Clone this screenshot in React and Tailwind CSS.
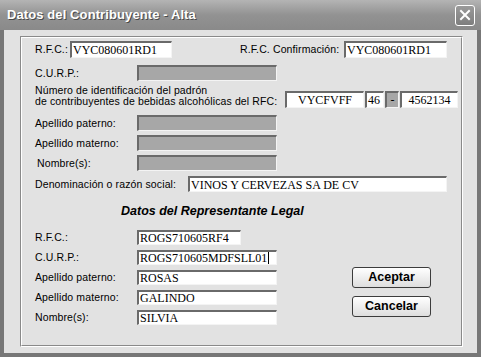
import React from "react";

const lbl = "font-['Liberation_Sans',Arial,sans-serif] text-[10.5px] tracking-[0.12px] text-black leading-none whitespace-nowrap";
const inpBase = "border-t-2 border-l-2 border-t-[#6a6a6a] border-l-[#6a6a6a] border-b border-r border-b-[#f4f4f4] border-r-[#f4f4f4] font-['Liberation_Serif','Times_New_Roman',serif] text-[12px] leading-none text-black flex items-center overflow-hidden whitespace-nowrap shrink-0";

function Input({ w, h = "h-[16px]", value = "", disabled = false, center = false, cursor = false }) {
  return (
    <div className={`${inpBase} ${w} ${h} ${disabled ? "bg-[#a7a7a7]" : "bg-white"} ${center ? "justify-center" : "pl-[1px]"}`}>
      <span>{value}</span>
      {cursor && <span className="inline-block w-[1px] h-[13px] bg-black ml-[1px]" />}
    </div>
  );
}

function Btn({ children, extra = "" }) {
  return (
    <div className={`w-[79px] h-[21px] rounded-[3px] border border-[#3c3c3c] bg-gradient-to-b from-white to-[#dedede] flex items-center justify-center font-['Liberation_Sans',Arial,sans-serif] font-bold text-[12.5px] text-black ${extra}`}>
      {children}
    </div>
  );
}

export default function App() {
  return (
    <div className="w-[481px] h-[357px] bg-[#777777] flex flex-col overflow-hidden">
      {/* Title bar */}
      <div className="h-[30px] shrink-0 bg-gradient-to-b from-[#b4b4b4] via-[#929292] to-[#8a8a8a] flex items-center justify-between pl-[7px] pr-[6px]">
        <span className="font-['Liberation_Sans',Arial,sans-serif] font-bold text-[13px] text-white [text-shadow:1px_1px_0_#4a4a4a] tracking-[0.1px]">
          Datos del Contribuyente - Alta
        </span>
        <div className="w-[20px] h-[21px] rounded-[3px] border border-white bg-gradient-to-b from-[#9a9a9a] to-[#7e7e7e] flex items-center justify-center">
          <svg width="12" height="12" viewBox="0 0 12 12">
            <path d="M2 2 L10 10 M10 2 L2 10" stroke="white" strokeWidth="2" strokeLinecap="square" />
          </svg>
        </div>
      </div>
      {/* Body */}
      <div className="flex-1 mx-[4px] mb-[4px] bg-[#e2e2e2] pl-[16px] pt-[6px]">
        <div className="w-[443px] h-[311px] border border-t-[#8a8a8a] border-l-[#8a8a8a] border-r-white border-b-white">
          <div className="w-full h-full border border-t-white border-l-white border-r-[#8a8a8a] border-b-[#8a8a8a] flex flex-col">
            {/* Row 1 */}
            <div className="flex items-center h-[17px] mt-[3px] pl-[13px]">
              <div className={`${lbl} w-[35px]`}>R.F.C.:</div>
              <Input w="w-[102px]" h="h-[17px]" value="VYC080601RD1" />
              <div className={`${lbl} w-[104px] ml-[68px]`}>R.F.C. Confirmación:</div>
              <Input w="w-[103px]" h="h-[17px]" value="VYC080601RD1" />
            </div>
            {/* Row 2 */}
            <div className="flex items-center h-[16px] mt-[7px] pl-[13px]">
              <div className={`${lbl} w-[102px]`}>C.U.R.P.:</div>
              <Input w="w-[140px]" disabled />
            </div>
            {/* Row 3 */}
            <div className="flex h-[24px] mt-[4px] pl-[13px]">
              <div className={`${lbl} w-[250px] leading-[12px]`}>
                <div>Número de identificación del padrón</div>
                <div>de contribuyentes de bebidas alcohólicas del RFC:</div>
              </div>
              <div className="flex self-end mb-[1px] h-[17px]">
                <Input w="w-[79px]" h="h-[17px]" value="VYCFVFF" center />
                <div className="w-[1px]" />
                <Input w="w-[19px]" h="h-[17px]" value="46" />
                <div className="w-[1px]" />
                <Input w="w-[14px]" h="h-[17px]" value="-" disabled center />
                <div className="w-[1px]" />
                <Input w="w-[58px]" h="h-[17px]" value="4562134" center />
              </div>
            </div>
            {/* Row 4-6 */}
            <div className="flex items-center h-[16px] mt-[6px] pl-[13px]">
              <div className={`${lbl} w-[102px]`}>Apellido paterno:</div>
              <Input w="w-[140px]" disabled />
            </div>
            <div className="flex items-center h-[16px] mt-[4px] pl-[13px]">
              <div className={`${lbl} w-[102px]`}>Apellido materno:</div>
              <Input w="w-[140px]" disabled />
            </div>
            <div className="flex items-center h-[16px] mt-[4px] pl-[13px]">
              <div className={`${lbl} w-[102px] pl-[2px]`}>Nombre(s):</div>
              <Input w="w-[140px]" disabled />
            </div>
            {/* Row 7 */}
            <div className="flex items-center h-[16px] mt-[5px] pl-[13px]">
              <div className={`${lbl} w-[153px]`}>Denominación o razón social:</div>
              <Input w="w-[259px]" value="VINOS Y CERVEZAS SA DE CV" />
            </div>
            {/* Heading */}
            <div className="h-[18px] mt-[10px] pl-[99px] flex items-center">
              <span className="font-['Liberation_Sans',Arial,sans-serif] font-bold italic text-[12.5px] text-black">
                Datos del Representante Legal
              </span>
            </div>
            {/* Representative */}
            <div className="flex mt-[10px] pl-[13px]">
              <div className="flex flex-col gap-[5px]">
                <div className="flex items-center h-[15px]">
                  <div className={`${lbl} w-[102px]`}>R.F.C.:</div>
                  <Input w="w-[104px]" h="h-[15px]" value="ROGS710605RF4" />
                </div>
                <div className="flex items-center h-[15px]">
                  <div className={`${lbl} w-[102px]`}>C.U.R.P.:</div>
                  <Input w="w-[140px]" h="h-[15px]" value="ROGS710605MDFSLL01" cursor />
                </div>
                <div className="flex items-center h-[15px]">
                  <div className={`${lbl} w-[102px]`}>Apellido paterno:</div>
                  <Input w="w-[140px]" h="h-[15px]" value="ROSAS" />
                </div>
                <div className="flex items-center h-[15px]">
                  <div className={`${lbl} w-[102px]`}>Apellido materno:</div>
                  <Input w="w-[140px]" h="h-[15px]" value="GALINDO" />
                </div>
                <div className="flex items-center h-[15px]">
                  <div className={`${lbl} w-[102px]`}>Nombre(s):</div>
                  <Input w="w-[140px]" h="h-[15px]" value="SILVIA" />
                </div>
              </div>
              <div className="flex flex-col ml-[75px] pt-[37px]">
                <Btn>Aceptar</Btn>
                <Btn extra="mt-[8px]">Cancelar</Btn>
              </div>
            </div>
          </div>
        </div>
      </div>
    </div>
  );
}
